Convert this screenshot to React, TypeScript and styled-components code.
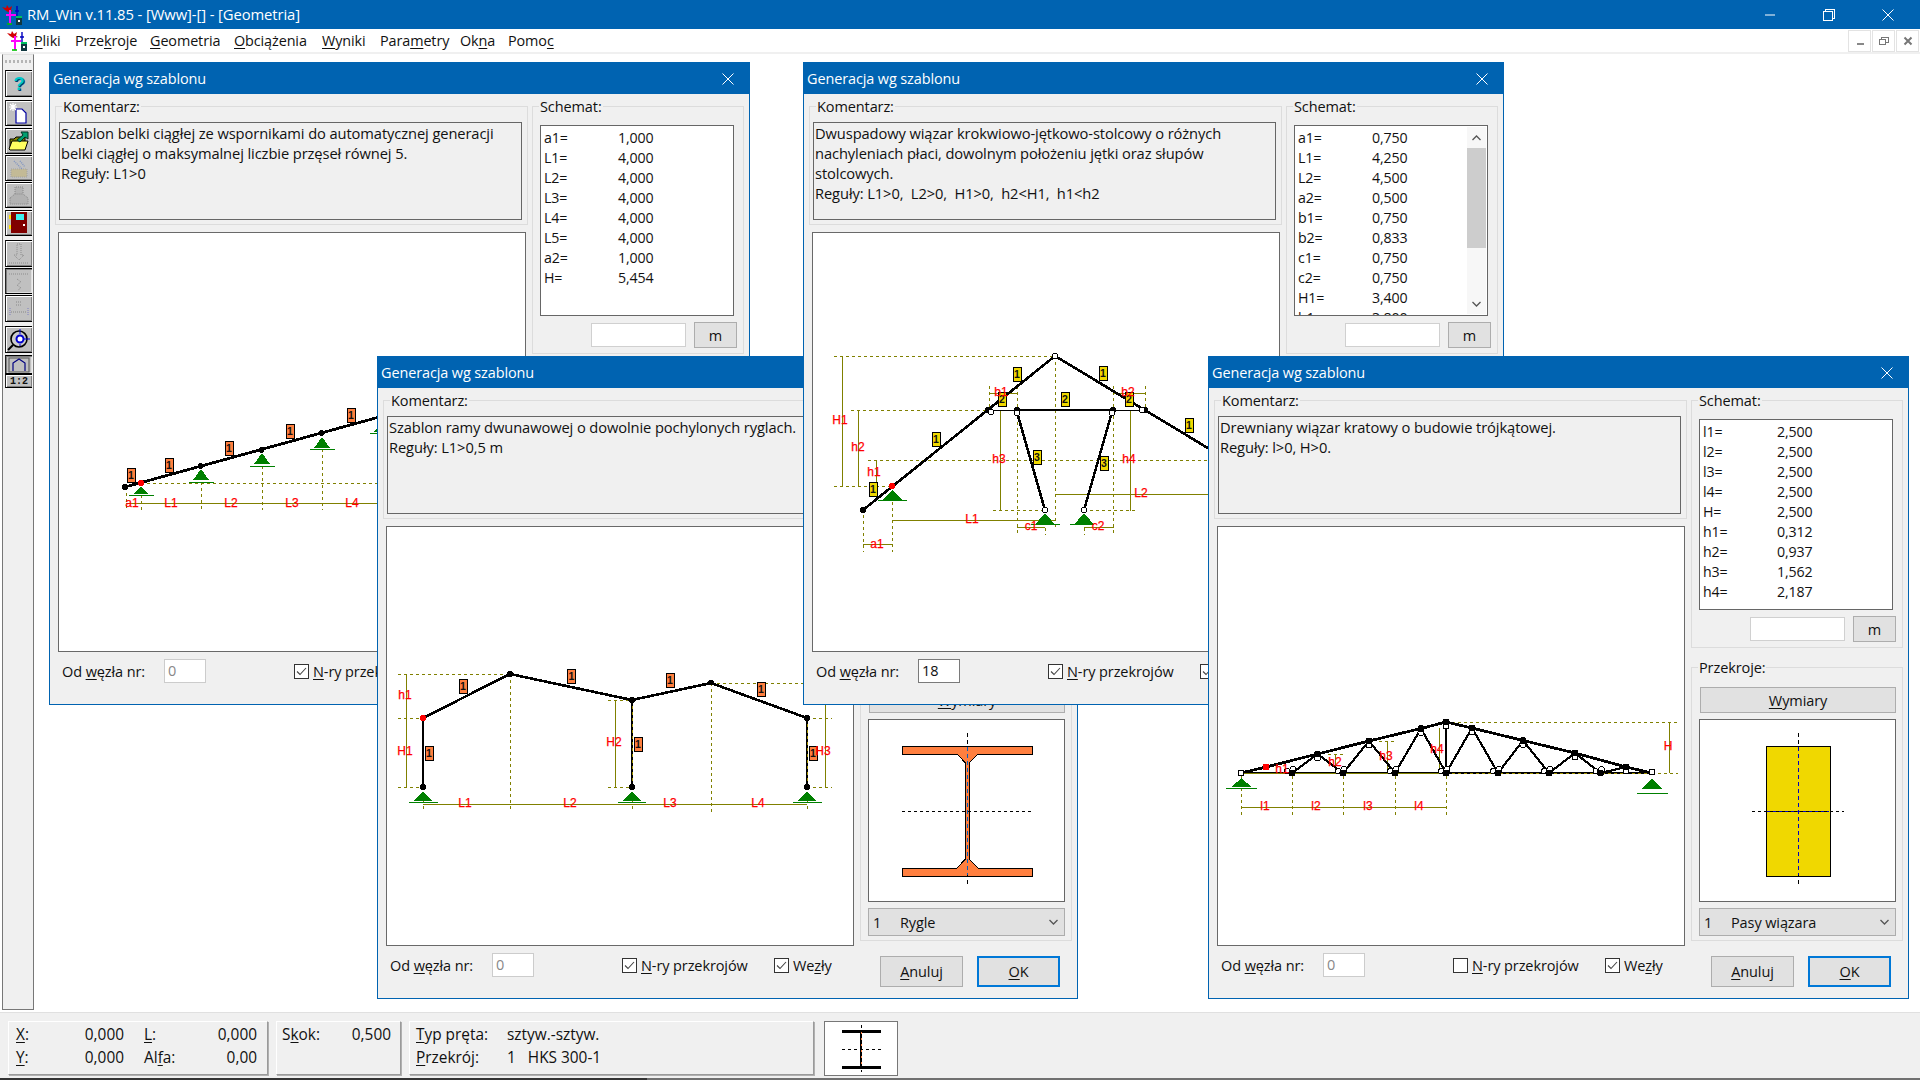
import React from "react";
import styled, { createGlobalStyle } from "styled-components";

const FONT = `"Open Sans", "Noto Sans", "Liberation Sans", sans-serif`;
const OLIVE = "#808000";
const GREEN = "#008000";
const RED = "#ff0000";
const ORANGE = "#ff7f3f";
const YELLOW = "#f0d800";

const Global = createGlobalStyle`
  html, body { margin: 0; padding: 0; background: #fff; overflow: hidden; }
  body { font-family: ${FONT}; font-size: 14.5px; color: #111; letter-spacing: -0.1px; }
`;

const Page = styled.div`
  width: 1920px;
  height: 1080px;
  display: flex;
  flex-direction: column;
  background: #fff;
  overflow: hidden;
`;

const U = styled.u`
  text-underline-offset: 2px;
  text-decoration-thickness: 1px;
`;

/* ------------ title + menu ------------ */
const TitleBar = styled.header`
  height: 29px;
  flex: none;
  background: #0063b1;
  color: #fff;
  display: flex;
  align-items: center;
  padding-left: 2px;
`;
const AppTitle = styled.span`
  margin-left: 5px;
  margin-bottom: 2px;
  font-size: 14.8px;
`;
const WinControls = styled.div`
  margin-left: auto;
  padding-right: 3px;
  display: flex;
  align-items: center;
`;
const WinBtn = styled.div`
  width: 59px;
  height: 29px;
  display: flex;
  align-items: center;
  justify-content: center;
`;
const MenuBar = styled.nav`
  height: 25px;
  flex: none;
  box-sizing: border-box;
  display: flex;
  align-items: center;
  padding-left: 7px;
  background: #fff;
  border-bottom: 2px solid #f0f0f0;
`;
const MenuItems = styled.div`
  display: flex;
  margin-left: 7px;
`;
const MenuItem = styled.span<{ $w: number }>`
  width: ${(p) => p.$w}px;
  font-size: 14.4px;
`;
const MdiBtns = styled.div`
  margin-left: auto;
  display: flex;
  gap: 1px;
  padding-right: 1px;
`;
const MdiBtn = styled.div`
  width: 23px;
  height: 22px;
  box-sizing: border-box;
  border: 1px solid #e3e3e3;
  display: flex;
  align-items: center;
  justify-content: center;
`;

/* ------------ workspace ------------ */
const Workspace = styled.main`
  flex: 1;
  display: flex;
  min-height: 0;
`;
const Toolbar = styled.aside`
  width: 32px;
  margin-left: 2px;
  margin-bottom: 2px;
  box-sizing: border-box;
  background: #f0f0f0;
  border-left: 1px solid #777;
  border-right: 1px solid #777;
  border-bottom: 1px solid #777;
  border-top: 1px solid #e0e0e0;
  display: flex;
  flex-direction: column;
  padding-left: 2px;
`;
const Grip = styled.div`
  height: 3px;
  margin: 5px 2px 7px 0;
  background: repeating-linear-gradient(90deg, #b5b5b5 0 2px, transparent 2px 4px);
`;
const ToolBtn = styled.div<{ $h: number; $mt?: number; $down?: boolean }>`
  width: 27px;
  height: ${(p) => p.$h}px;
  margin-top: ${(p) => p.$mt ?? 0}px;
  flex: none;
  box-sizing: border-box;
  background: #c0c0c0;
  border-top: 1px solid #000;
  border-bottom: 1px solid #000;
  border-left: 1px solid #222;
  box-shadow: ${(p) =>
    p.$down
      ? "inset 1px 1px 0 #808080, inset -1px -1px 0 #dfdfdf"
      : "inset 1px 1px 0 #fff, inset -1px -1px 0 #808080"};
  display: flex;
  align-items: center;
  justify-content: center;
`;
const QuestionMark = styled.span`
  font-family: "Liberation Sans", sans-serif;
  font-weight: 700;
  font-size: 19px;
  color: #00c8c8;
  text-shadow: 1px 1px 0 #003a6a;
`;
const Ratio = styled.span`
  font-family: "Liberation Mono", monospace;
  font-size: 10px;
  font-weight: 700;
  letter-spacing: 0;
  color: #111;
`;
const Desktop = styled.div`
  flex: 1;
  position: relative;
`;

/* ------------ dialog ------------ */
const Dialog = styled.section<{ $x: number; $y: number }>`
  position: absolute;
  left: ${(p) => p.$x - 34}px;
  top: ${(p) => p.$y - 54}px;
  width: 701px;
  height: 643px;
  box-sizing: border-box;
  border: 1px solid #0063b1;
  background: #f0f0f0;
  display: flex;
  flex-direction: column;
`;
const DialogTitle = styled.div`
  height: 31px;
  flex: none;
  background: #0063b1;
  color: #fff;
  display: flex;
  align-items: center;
  justify-content: space-between;
  padding: 0 15px 0 3px;
  font-size: 14.45px;
`;
const DialogBody = styled.div`
  flex: 1;
  display: grid;
  grid-template-columns: 477px 212px;
  padding-left: 5px;
  padding-top: 12px;
  min-height: 0;
`;
const LeftCol = styled.div`
  display: flex;
  flex-direction: column;
  min-width: 0;
`;
const RightCol = styled.div`
  display: flex;
  flex-direction: column;
  min-width: 0;
`;
const Group = styled.div<{ $h: number; $w: number; $mt?: number }>`
  position: relative;
  box-sizing: border-box;
  width: ${(p) => p.$w}px;
  height: ${(p) => p.$h}px;
  margin-top: ${(p) => p.$mt ?? 0}px;
  border: 1px solid #dcdcdc;
`;
const Legend = styled.span`
  position: absolute;
  top: -9px;
  left: 6px;
  padding: 0 1px;
  background: #f0f0f0;
  line-height: 18px;
`;
const CommentBox = styled.div`
  box-sizing: border-box;
  margin: 15px 5px 0 3px;
  height: 98px;
  border: 1px solid #666;
  padding: 0 1px;
  line-height: 20px;
  font-size: 14.7px;
  white-space: pre;
`;
const Canvas = styled.div`
  box-sizing: border-box;
  width: 468px;
  height: 420px;
  margin: 7px 0 0 3px;
  background: #fff;
  border: 1px solid #696969;
  overflow: hidden;
`;
const DiagramSvg = styled.svg`
  display: block;
  width: 466px;
  height: 418px;
  shape-rendering: crispEdges;
  text {
    shape-rendering: auto;
  }
`;
const FooterRow = styled.div`
  display: grid;
  grid-template-columns: 102px 130px 152px auto;
  align-items: center;
  padding-left: 7px;
  margin-top: 7px;
  height: 24px;
`;
const NumberInput = styled.div<{ $active?: boolean }>`
  box-sizing: border-box;
  width: 42px;
  height: 24px;
  background: #fff;
  border: 1px solid ${(p) => (p.$active ? "#7a7a7a" : "#ccc")};
  color: ${(p) => (p.$active ? "#111" : "#888")};
  padding-left: 3px;
  line-height: 21px;
`;
const CheckLabel = styled.div`
  display: flex;
  align-items: center;
  gap: 4px;
`;
const CheckBox = styled.span`
  box-sizing: border-box;
  width: 15px;
  height: 15px;
  background: #fff;
  border: 1px solid #333;
  display: flex;
  align-items: center;
  justify-content: center;
`;
const ListBox = styled.div`
  position: relative;
  box-sizing: border-box;
  margin: 18px 0 0 7px;
  width: 194px;
  height: 191px;
  background: #fff;
  border: 1px solid #666;
  padding: 2px 3px;
  overflow: hidden;
  font-size: 14.2px;
`;
const ListRow = styled.div`
  display: grid;
  grid-template-columns: 74px auto;
  height: 20px;
  line-height: 20px;
  white-space: nowrap;
`;
const ScrollBar = styled.div`
  position: absolute;
  top: 1px;
  right: 1px;
  bottom: 1px;
  width: 19px;
  background: #f7f7f7;
  display: flex;
  flex-direction: column;
  align-items: center;
  justify-content: space-between;
`;
const ScrollThumb = styled.div`
  position: absolute;
  top: 21px;
  left: 0;
  width: 19px;
  height: 100px;
  background: #cdcdcd;
`;
const ScrollArrow = styled.div`
  height: 21px;
  display: flex;
  align-items: center;
`;
const UnitRow = styled.div`
  display: flex;
  align-items: center;
  margin: 6px 0 0 58px;
  gap: 8px;
`;
const TextField = styled.div`
  box-sizing: border-box;
  width: 95px;
  height: 24px;
  background: #fff;
  border: 1px solid #d0d0d0;
`;
const PlainButton = styled.div<{ $w: number; $h: number }>`
  box-sizing: border-box;
  width: ${(p) => p.$w}px;
  height: ${(p) => p.$h}px;
  background: #e1e1e1;
  border: 1px solid #adadad;
  display: flex;
  align-items: center;
  justify-content: center;
`;
const DefaultButton = styled(PlainButton)`
  border: 2px solid #0078d7;
`;
const WideBtnSlot = styled.div`
  margin: 19px 0 0 8px;
`;
const SectionBox = styled.div`
  box-sizing: border-box;
  margin: 6px 0 0 7px;
  width: 197px;
  height: 183px;
  background: #fff;
  border: 1px solid #666;
`;
const SectionSvg = styled.svg`
  display: block;
  width: 195px;
  height: 181px;
  shape-rendering: crispEdges;
`;
const SelectBox = styled.div`
  box-sizing: border-box;
  margin: 6px 0 0 7px;
  width: 197px;
  height: 28px;
  background: #e1e1e1;
  border: 1px solid #adadad;
  display: flex;
  align-items: center;
  padding: 0 6px 0 4px;
`;
const SelectNum = styled.span`
  width: 27px;
`;
const SelectChevron = styled.span`
  margin-left: auto;
  display: flex;
`;
const ActionRow = styled.div`
  display: flex;
  gap: 14px;
  margin: 15px 0 0 20px;
`;

/* ------------ status bar ------------ */
const StatusBar = styled.footer`
  height: 66px;
  flex: none;
  box-sizing: border-box;
  background: #f0f0f0;
  border-top: 1px solid #e0e0e0;
  display: flex;
  align-items: flex-start;
  gap: 8px;
  padding: 8px 0 0 8px;
`;
const Panel = styled.div<{ $w: number; $cols: string; $pl?: number }>`
  box-sizing: border-box;
  width: ${(p) => p.$w}px;
  height: 54px;
  padding: 1px 0 0 ${(p) => p.$pl ?? 7}px;
  display: grid;
  grid-template-columns: ${(p) => p.$cols};
  grid-auto-rows: 23px;
  align-items: center;
  font-size: 15.4px;
  letter-spacing: 0;
  border: 1px solid;
  border-color: #fff #9a9a9a #9a9a9a #fff;
  box-shadow: 1px 1px 0 #b0b0b0;
`;
const Num = styled.span`
  text-align: right;
`;
const SecondLabel = styled.span`
  padding-left: 20px;
`;
const Mini = styled.div`
  box-sizing: border-box;
  width: 74px;
  height: 55px;
  margin: 0 0 0 2px;
  background: #fff;
  border: 1px solid #777;
`;
const TaskStrip = styled.div`
  height: 2px;
  flex: none;
  background: linear-gradient(90deg, #333 0 647px, #707070 647px 100%);
`;

/* ------------ diagram primitives ------------ */
type P = [number, number];
const Dash = ({ a, b, c = OLIVE }: { a: P; b: P; c?: string }) => (
  <line x1={a[0]} y1={a[1]} x2={b[0]} y2={b[1]} stroke={c} strokeWidth={1} strokeDasharray="3 3" />
);
const Dim = ({ a, b }: { a: P; b: P }) => (
  <line x1={a[0]} y1={a[1]} x2={b[0]} y2={b[1]} stroke={OLIVE} strokeWidth={1} />
);
const Bar = ({ pts, w = 2.6 }: { pts: P[]; w?: number }) => (
  <polyline points={pts.map((p) => p.join(",")).join(" ")} fill="none" stroke="#000" strokeWidth={w} />
);
const Knot = ({ p, c = "#000", r = 3 }: { p: P; c?: string; r?: number }) => (
  <circle cx={p[0]} cy={p[1]} r={r} fill={c} />
);
const Open = ({ p, r = 2.6 }: { p: P; r?: number }) => (
  <circle cx={p[0]} cy={p[1]} r={r} fill="#fff" stroke="#000" strokeWidth={1} />
);
const Support = ({ x, tip, base, line, hw = 9, ll, lr }: { x: number; tip: number; base: number; line: number; hw?: number; ll: number; lr: number }) => (
  <g>
    <polygon points={`${x},${tip} ${x + hw},${base} ${x - hw},${base}`} fill={GREEN} />
    <line x1={ll} y1={line} x2={lr} y2={line} stroke={GREEN} strokeWidth={1} />
  </g>
);
const Tag = ({ p, t = "1", c = ORANGE }: { p: P; t?: string; c?: string }) => (
  <g>
    <rect x={p[0] - 4} y={p[1] - 7} width={8} height={14} fill={c} stroke="#000" strokeWidth={1} />
    <text x={p[0]} y={p[1] + 4} textAnchor="middle" fontFamily="Liberation Sans" fontWeight="700" fontSize="10.5" fill="#111" letterSpacing="0">
      {t}
    </text>
  </g>
);
const Lab = ({ p, t }: { p: P; t: string }) => (
  <text x={p[0]} y={p[1] + 4} textAnchor="middle" fontFamily="Liberation Sans" fontSize="12" fontWeight="400" fill={RED} stroke={RED} strokeWidth="0.25" letterSpacing="0">
    {t}
  </text>
);

const BeamDiagram = () => (
  <g>
    <Dash a={[140, 483]} b={[540, 483]} />
    {[[125, 487], [140, 495], [200, 482], [261, 466], [321, 449]].map(([x, y]) => (
      <Dash key={x} a={[x, y]} b={[x, 510]} />
    ))}
    <Dim a={[125, 503]} b={[520, 503]} />
    <Bar pts={[[124, 487], [520, 378]]} w={2.8} />
    <Support x={140} tip={486} base={494} line={495.5} hw={7.5} ll={128} lr={153} />
    <Support x={200} tip={469} base={480} line={482} hw={8} ll={188} lr={213} />
    <Support x={261} tip={453} base={464} line={466} hw={8} ll={249} lr={274} />
    <Support x={321} tip={437} base={448} line={449} hw={8} ll={309} lr={334} />
    <Support x={381} tip={421} base={432} line={433} hw={8} ll={369} lr={394} />
    <Knot p={[124, 487]} />
    <Knot p={[140, 483]} c={RED} />
    <Knot p={[199.5, 466]} />
    <Knot p={[260.5, 450]} />
    <Knot p={[320.5, 433]} />
    {([[130, 475], [168, 465], [228, 448], [289, 431], [350, 415]] as P[]).map((p) => (
      <Tag key={p[0]} p={p} />
    ))}
    <Lab p={[131, 503]} t="a1" />
    <Lab p={[170, 503]} t="L1" />
    <Lab p={[230, 503]} t="L2" />
    <Lab p={[291, 503]} t="L3" />
    <Lab p={[351, 503]} t="L4" />
  </g>
);

const FrameDiagram = () => (
  <g>
    <Dash a={[397, 674]} b={[509, 674]} />
    <Dash a={[397, 718]} b={[422, 718]} />
    <Dash a={[397, 787]} b={[422, 787]} />
    <Dim a={[405, 674]} b={[405, 787]} />
    <Dash a={[607, 700]} b={[631, 700]} />
    <Dash a={[607, 787]} b={[631, 787]} />
    <Dim a={[614, 700]} b={[614, 787]} />
    <Dash a={[710, 683]} b={[832, 683]} />
    <Dash a={[806, 718]} b={[831, 718]} />
    <Dash a={[806, 787]} b={[831, 787]} />
    <Dim a={[824, 683]} b={[824, 787]} />
    <Dash a={[509.5, 674]} b={[509.5, 812]} />
    <Dash a={[710.5, 683]} b={[710.5, 812]} />
    <Dash a={[422, 800]} b={[422, 812]} />
    <Dash a={[631.5, 800]} b={[631.5, 812]} />
    <Dash a={[806.5, 800]} b={[806.5, 812]} />
    <Dim a={[422, 804]} b={[806, 804]} />
    <Bar pts={[[422, 787], [422, 718], [509, 674], [631, 700], [710, 683], [806, 718], [806, 787]]} />
    <Bar pts={[[631, 700], [631, 787]]} />
    <Dash a={[631.5, 700]} b={[631.5, 787]} c="#a09000" />
    <Dash a={[806.5, 718]} b={[806.5, 787]} c="#a09000" />
    <Support x={422} tip={791} base={801} line={802} hw={9} ll={408} lr={437} />
    <Support x={631} tip={791} base={801} line={802} hw={9} ll={617} lr={645} />
    <Support x={806} tip={791} base={801} line={802} hw={9} ll={792} lr={821} />
    <Knot p={[422, 718]} c={RED} />
    {([[422, 787], [509, 674], [631, 700], [631, 787], [710, 682.5], [806, 718], [806, 787]] as P[]).map((p) => (
      <Knot key={p.join()} p={p} />
    ))}
    {([[462, 686], [570.5, 676], [669, 680], [760, 689], [428, 753], [637, 744], [812, 753]] as P[]).map((p) => (
      <Tag key={p[0]} p={p} />
    ))}
    <Lab p={[404, 695]} t="h1" />
    <Lab p={[404, 751]} t="H1" />
    <Lab p={[613, 742]} t="H2" />
    <Lab p={[822, 751]} t="H3" />
    <Lab p={[464, 803]} t="L1" />
    <Lab p={[569, 803]} t="L2" />
    <Lab p={[669, 803]} t="L3" />
    <Lab p={[757, 803]} t="L4" />
  </g>
);

const RafterDiagram = () => (
  <g>
    <Dash a={[833, 356]} b={[1054, 356]} />
    <Dim a={[841, 356]} b={[841, 486]} />
    <Dash a={[833, 486]} b={[891, 486]} />
    <Dash a={[850, 410.5]} b={[987, 410.5]} />
    <Dim a={[857, 410]} b={[857, 486]} />
    <Dash a={[867, 460]} b={[1260, 460]} />
    <Dim a={[875, 460]} b={[875, 486]} />
    <Dash a={[862, 515]} b={[862, 552]} />
    <Dash a={[891, 490]} b={[891, 552]} />
    <Dim a={[862, 544]} b={[891, 544]} />
    <Dim a={[891, 520.5]} b={[1054, 520.5]} />
    <Dash a={[1054.5, 356]} b={[1054.5, 528]} />
    <Dim a={[1054, 494.5]} b={[1260, 494.5]} />
    <Dim a={[988, 393]} b={[1016, 393]} />
    <Dash a={[988, 386]} b={[988, 410]} />
    <Dash a={[1016.5, 386]} b={[1016.5, 535]} />
    <Dim a={[1016, 527]} b={[1044, 527]} />
    <Dash a={[1044.5, 510]} b={[1044.5, 535]} />
    <Dim a={[1083, 527]} b={[1113, 527]} />
    <Dash a={[1083.5, 510]} b={[1083.5, 535]} />
    <Dash a={[1112.5, 386]} b={[1112.5, 535]} />
    <Dim a={[1113, 393]} b={[1145, 393]} />
    <Dash a={[1144.5, 386]} b={[1144.5, 410]} />
    <Dim a={[999.5, 410]} b={[999.5, 511]} />
    <Dash a={[992, 510.5]} b={[1044, 510.5]} />
    <Dim a={[1129.5, 410]} b={[1129.5, 511]} />
    <Dash a={[1083, 510.5]} b={[1137, 510.5]} />
    <Bar pts={[[862, 510], [1054, 356], [1240, 468]]} />
    <Bar pts={[[1016, 410], [1112, 410]]} w={2.8} />
    <Bar pts={[[990, 410], [1141, 410]]} w={1} />
    <Bar pts={[[1016, 412], [1044, 510]]} />
    <Bar pts={[[1111, 412], [1083, 510]]} />
    <Support x={891} tip={490} base={500} line={500.5} hw={10} ll={877} lr={906} />
    <Support x={1044} tip={513} base={523.5} line={524} hw={9} ll={1030} lr={1059} />
    <Support x={1083} tip={513} base={523.5} line={524} hw={9} ll={1069} lr={1093} />
    <Knot p={[862, 510]} />
    <Knot p={[891, 486]} c={RED} />
    <Knot p={[987, 410]} />
    <Knot p={[1144, 410]} />
    <Knot p={[1016, 410]} />
    <Knot p={[1112, 410]} />
    <Open p={[1054, 356]} />
    <Open p={[990, 412]} />
    <Open p={[1141, 410]} />
    <Open p={[1016, 413]} />
    <Open p={[1111, 413]} />
    <Open p={[1044, 510]} />
    <Open p={[1083, 510]} />
    {([[935, 439, "1"], [872, 489, "1"], [1016, 374, "1"], [1102, 373, "1"], [1001, 399, "2"], [1064, 399, "2"], [1128, 399, "2"], [1036, 457, "3"], [1103, 463, "3"], [1188, 425, "1"]] as [number, number, string][]).map(([x, y, t]) => (
      <Tag key={`${x}-${y}`} p={[x, y]} t={t} c={YELLOW} />
    ))}
    <Lab p={[839, 420]} t="H1" />
    <Lab p={[857, 447]} t="h2" />
    <Lab p={[873, 472]} t="h1" />
    <Lab p={[876, 544]} t="a1" />
    <Lab p={[971, 519]} t="L1" />
    <Lab p={[1140, 493]} t="L2" />
    <Lab p={[1000, 392]} t="b1" />
    <Lab p={[1127, 392]} t="b2" />
    <Lab p={[1030, 526]} t="c1" />
    <Lab p={[1097, 526]} t="c2" />
    <Lab p={[998, 459]} t="h3" />
    <Lab p={[1128, 459]} t="h4" />
  </g>
);

const TOP: P[] = [[1240, 773], [1265, 767], [1316.5, 754], [1368, 741], [1420, 728.5], [1445, 722], [1471, 728], [1522, 740.5], [1574, 753], [1625, 767], [1651, 773]];
const WEB: P[] = [[1291, 773], [1316.5, 754], [1342, 773], [1368, 741], [1394, 773], [1420, 728.5], [1445, 773], [1471, 728], [1497, 773], [1522, 740.5], [1548, 773], [1574, 753], [1599.5, 773], [1625, 767]];
const BOTTOM_NODES: P[] = [[1291, 773], [1342, 773], [1394, 773], [1445, 773], [1497, 773], [1548, 773], [1599.5, 773]];
const TOP_NODES: P[] = [[1316.5, 754], [1368, 741], [1420, 728.5], [1445, 722], [1471, 728], [1522, 740.5], [1574, 753], [1625, 767]];

const TrussDiagram = () => (
  <g>
    <Dash a={[1445, 722]} b={[1677, 722]} />
    <Dash a={[1651, 773]} b={[1677, 773]} />
    <Dim a={[1668.5, 722]} b={[1668.5, 773]} />
    <Dim a={[1334.5, 754]} b={[1334.5, 773]} />
    <Dim a={[1386, 741]} b={[1386, 773]} />
    <Dim a={[1438, 728]} b={[1438, 773]} />
    <Dash a={[1327, 754]} b={[1342, 754]} />
    <Dash a={[1378, 741]} b={[1393, 741]} />
    {[1240.5, 1291.5, 1342.5, 1394, 1445.5].map((x) => (
      <Dash key={x} a={[x, 776]} b={[x, 815]} />
    ))}
    <Dim a={[1240, 807]} b={[1446, 807]} />
    <Bar pts={TOP} w={2.8} />
    <Bar pts={WEB} w={2.2} />
    <Bar pts={[[1445, 722], [1445, 773]]} w={2.2} />
    <Bar pts={[[1240, 773], [1651, 773]]} w={2} />
    <Dim a={[1240, 773]} b={[1445, 773]} />
    <Dash a={[1445, 773]} b={[1651, 773]} c="#a09000" />
    <Support x={1240.5} tip={778} base={787} line={788.5} hw={10} ll={1225} lr={1256} />
    <Support x={1651} tip={778} base={788.5} line={793} hw={10} ll={1636} lr={1667} />
    {BOTTOM_NODES.map((p) => (
      <g key={p[0]}>
        <Open p={[p[0] + 1, p[1] - 3.5]} r={3} />
        <Open p={[p[0] - 5, p[1] - 2]} r={2.5} />
        <Knot p={p} r={3.4} />
      </g>
    ))}
    {TOP_NODES.map((p) => (
      <g key={p[0]}>
        <Open p={[p[0], p[1] + 4]} r={3} />
        <Knot p={p} r={3.4} />
      </g>
    ))}
    <Open p={[1240, 773]} r={3} />
    <Open p={[1651, 772]} r={3} />
    <Knot p={[1265, 767]} c={RED} r={3.4} />
    <Lab p={[1281, 769]} t="h1" />
    <Lab p={[1334, 762]} t="h2" />
    <Lab p={[1385, 756]} t="h3" />
    <Lab p={[1436, 749]} t="h4" />
    <Lab p={[1667, 746]} t="H" />
    <Lab p={[1264, 806]} t="l1" />
    <Lab p={[1315, 806]} t="l2" />
    <Lab p={[1367, 806]} t="l3" />
    <Lab p={[1418, 806]} t="l4" />
  </g>
);

const IBeamSection = () => (
  <SectionSvg viewBox="0 0 195 181">
    <path d="M33 26H163V34H109L100 43V139L109 148H163V156H33V148H88L96.5 139V43L88 34H33Z" fill={ORANGE} stroke="#000" strokeWidth={1} />
    <line x1="98" y1="13" x2="98" y2="166" stroke="#000" strokeDasharray="4 3" />
    <line x1="98" y1="27" x2="98" y2="155" stroke="#0060c0" strokeDasharray="4 3" />
    <line x1="33" y1="91" x2="162" y2="91" stroke="#000" strokeDasharray="3 3" />
  </SectionSvg>
);
const RectSection = () => (
  <SectionSvg viewBox="0 0 195 181">
    <rect x="66" y="26" width="64" height="130" fill={YELLOW} stroke="#000" />
    <line x1="98" y1="13" x2="98" y2="166" stroke="#000" strokeDasharray="4 3" />
    <line x1="98" y1="27" x2="98" y2="155" stroke="#0000c0" strokeDasharray="4 3" />
    <line x1="52" y1="91" x2="144" y2="91" stroke="#000" strokeDasharray="3 3" />
    <line x1="67" y1="91" x2="129" y2="91" stroke="#0000c0" strokeDasharray="3 3" />
  </SectionSvg>
);

const CheckMark = () => (
  <svg width="11" height="9" viewBox="0 0 11 9">
    <path d="M1 4.5L4 7.5L10 1" fill="none" stroke="#444" strokeWidth="1.1" />
  </svg>
);
const Chevron = ({ up }: { up?: boolean }) => (
  <svg width="9" height="6" viewBox="0 0 9 6">
    <path d={up ? "M.5 5L4.5 1L8.5 5" : "M.5 1L4.5 5L8.5 1"} fill="none" stroke="#555" strokeWidth="1.3" />
  </svg>
);
const CloseX = ({ size = 12 }: { size?: number }) => (
  <svg width={size} height={size} viewBox="0 0 12 12">
    <path d="M.5 .5L11.5 11.5M11.5 .5L.5 11.5" stroke="#fff" strokeWidth="1" />
  </svg>
);

const AppIcon = () => (
  <svg width="20" height="20" viewBox="0 0 20 20">
    <path d="M0 2L4 3L5 0L7 3L10 1L9 5L11 6L6 7L3 5Z" fill="#d00000" />
    <path d="M8 5V19" stroke="#ff00ff" strokeWidth="2" />
    <path d="M4 10H14" stroke="#ff00ff" strokeWidth="2" />
    <path d="M15 1V11M13 6H17" stroke="#0000c0" strokeWidth="1.4" />
    <path d="M5 19H10" stroke="#00c000" strokeWidth="1.6" />
    <rect x="14" y="12" width="6" height="8" fill="#103840" />
    <rect x="14" y="11" width="6" height="2" fill="#00c060" />
    <rect x="16" y="15" width="2" height="2" fill="#fff" />
  </svg>
);

type Row = [string, string];
type DlgProps = {
  x: number;
  y: number;
  comment: string[];
  rows: Row[];
  diagram: React.ReactNode;
  section: React.ReactNode;
  sectionName: string;
  nodeFrom: string;
  activeInput?: boolean;
  numbersChecked: boolean;
  scroll?: boolean;
};

const GenDialog = ({ x, y, comment, rows, diagram, section, sectionName, nodeFrom, activeInput, numbersChecked, scroll }: DlgProps) => (
  <Dialog $x={x} $y={y}>
    <DialogTitle>
      <span>Generacja wg szablonu</span>
      <CloseX />
    </DialogTitle>
    <DialogBody>
      <LeftCol>
        <Group $w={473} $h={119}>
          <Legend>Komentarz:</Legend>
          <CommentBox>
            {comment.map((l) => (
              <div key={l}>{l}</div>
            ))}
          </CommentBox>
        </Group>
        <Canvas>
          <DiagramSvg viewBox={`${x + 9} ${y + 171} 466 418`}>{diagram}</DiagramSvg>
        </Canvas>
        <FooterRow>
          <span>
            Od <U>w</U>ęzła nr:
          </span>
          <NumberInput $active={activeInput}>{nodeFrom}</NumberInput>
          <CheckLabel>
            <CheckBox>{numbersChecked && <CheckMark />}</CheckBox>
            <span>
              <U>N</U>-ry przekrojów
            </span>
          </CheckLabel>
          <CheckLabel>
            <CheckBox>
              <CheckMark />
            </CheckBox>
            <span>
              We<U>z</U>ły
            </span>
          </CheckLabel>
        </FooterRow>
      </LeftCol>
      <RightCol>
        <Group $w={212} $h={248}>
          <Legend>Schemat:</Legend>
          <ListBox>
            {rows.map(([k, v]) => (
              <ListRow key={k}>
                <span>{k}</span>
                <span>{v}</span>
              </ListRow>
            ))}
            {scroll && (
              <ScrollBar>
                <ScrollThumb />
                <ScrollArrow>
                  <Chevron up />
                </ScrollArrow>
                <ScrollArrow>
                  <Chevron />
                </ScrollArrow>
              </ScrollBar>
            )}
          </ListBox>
          <UnitRow>
            <TextField />
            <PlainButton $w={43} $h={26}>m</PlainButton>
          </UnitRow>
        </Group>
        <Group $w={212} $h={274} $mt={19}>
          <Legend>Przekroje:</Legend>
          <WideBtnSlot>
            <PlainButton $w={196} $h={26}>
              <span>
                <U>W</U>ymiary
              </span>
            </PlainButton>
          </WideBtnSlot>
          <SectionBox>{section}</SectionBox>
          <SelectBox>
            <SelectNum>1</SelectNum>
            <span>{sectionName}</span>
            <SelectChevron>
              <Chevron />
            </SelectChevron>
          </SelectBox>
        </Group>
        <ActionRow>
          <PlainButton $w={83} $h={31}>
            <span>
              <U>A</U>nuluj
            </span>
          </PlainButton>
          <DefaultButton $w={83} $h={31}>
            <span>
              <U>O</U>K
            </span>
          </DefaultButton>
        </ActionRow>
      </RightCol>
    </DialogBody>
  </Dialog>
);

const menu: [React.ReactNode, number][] = [
  [<><U>P</U>liki</>, 41],
  [<>Prze<U>k</U>roje</>, 75],
  [<><U>G</U>eometria</>, 84],
  [<><U>O</U>bciążenia</>, 88],
  [<><U>W</U>yniki</>, 58],
  [<>Para<U>m</U>etry</>, 80],
  [<>Ok<U>n</U>a</>, 48],
  [<>Pomo<U>c</U></>, 60],
];

const rowsW1: Row[] = [["a1=", "1,000"], ["L1=", "4,000"], ["L2=", "4,000"], ["L3=", "4,000"], ["L4=", "4,000"], ["L5=", "4,000"], ["a2=", "1,000"], ["H=", "5,454"]];
const rowsW2: Row[] = [["L1=", "4,000"], ["L2=", "4,000"], ["L3=", "4,000"], ["L4=", "4,000"]];
const rowsW3: Row[] = [["a1=", "0,750"], ["L1=", "4,250"], ["L2=", "4,500"], ["a2=", "0,500"], ["b1=", "0,750"], ["b2=", "0,833"], ["c1=", "0,750"], ["c2=", "0,750"], ["H1=", "3,400"], ["h1=", "3,800"]];
const rowsW4: Row[] = [["l1=", "2,500"], ["l2=", "2,500"], ["l3=", "2,500"], ["l4=", "2,500"], ["H=", "2,500"], ["h1=", "0,312"], ["h2=", "0,937"], ["h3=", "1,562"], ["h4=", "2,187"]];

export default function App() {
  return (
    <Page>
      <Global />
      <TitleBar>
        <AppIcon />
        <AppTitle>RM_Win v.11.85 - [Www]-[] - [Geometria]</AppTitle>
        <WinControls>
          <WinBtn>
            <svg width="12" height="12" viewBox="0 0 12 12">
              <path d="M1 6H11" stroke="#fff" />
            </svg>
          </WinBtn>
          <WinBtn>
            <svg width="12" height="12" viewBox="0 0 12 12" shapeRendering="crispEdges">
              <path d="M.5 2.5H9.5V11.5H.5ZM2.5 2.5V.5H11.5V9.5H9.5" stroke="#fff" fill="none" />
            </svg>
          </WinBtn>
          <WinBtn>
            <CloseX />
          </WinBtn>
        </WinControls>
      </TitleBar>
      <MenuBar>
        <AppIcon />
        <MenuItems>
          {menu.map(([label, w], i) => (
            <MenuItem key={i} $w={w}>
              {label}
            </MenuItem>
          ))}
        </MenuItems>
        <MdiBtns>
          <MdiBtn>
            <svg width="10" height="10" viewBox="0 0 10 10">
              <rect x="2" y="7" width="7" height="2" fill="#888" />
            </svg>
          </MdiBtn>
          <MdiBtn>
            <svg width="10" height="10" viewBox="0 0 10 10" shapeRendering="crispEdges">
              <path d="M.5 3.5H6.5V8.5H.5ZM2.5 3V1.5H9.5V6H7" stroke="#777" fill="none" />
            </svg>
          </MdiBtn>
          <MdiBtn>
            <svg width="10" height="10" viewBox="0 0 10 10">
              <path d="M1.5 1.5L8.5 8.5M8.5 1.5L1.5 8.5" stroke="#777" strokeWidth="2" />
            </svg>
          </MdiBtn>
        </MdiBtns>
      </MenuBar>
      <Workspace>
        <Toolbar>
          <Grip />
          <ToolBtn $h={27}>
            <QuestionMark>?</QuestionMark>
          </ToolBtn>
          <ToolBtn $h={26} $mt={3}>
            <svg width="22" height="22" viewBox="0 0 22 22">
              <path d="M8 7H14L18 11V21H8Z" fill="#fff" stroke="#0000a0" strokeWidth="1.2" />
              <path d="M5 1V9M1 5H9M2 2L8 8M8 2L2 8" stroke="#fff" strokeWidth="1.2" />
            </svg>
          </ToolBtn>
          <ToolBtn $h={26} $mt={2}>
            <svg width="22" height="22" viewBox="0 0 22 22">
              <path d="M2 9H6L8 7H17V19H2Z" fill="#808000" stroke="#000" />
              <path d="M1 19L4 11H20L17 20H2Z" fill="#ffff60" stroke="#000" />
              <path d="M9 10L15 5L13 2L20 2L20 9L17 7L12 12Z" fill="#00a070" stroke="#003020" />
            </svg>
          </ToolBtn>
          <ToolBtn $h={26} $mt={1}>
            <svg width="22" height="22" viewBox="0 0 22 22" opacity=".75">
              <path d="M3 12H19V20H3Z" fill="#c4b888" stroke="#999" strokeDasharray="1 1" />
              <path d="M6 4L14 12M12 4L17 10" stroke="#6a86c0" strokeDasharray="1 1" strokeWidth="1.4" />
            </svg>
          </ToolBtn>
          <ToolBtn $h={26} $mt={1}>
            <svg width="22" height="22" viewBox="0 0 22 22">
              <path d="M7 10V3H15V10M2 14L7 10H15L20 14V20H2Z" fill="#b2b2b2" stroke="#888" strokeDasharray="1 1" />
            </svg>
          </ToolBtn>
          <ToolBtn $h={26} $mt={2}>
            <svg width="22" height="24" viewBox="0 0 22 24">
              <rect x="3" y="1" width="16" height="21" fill="#800000" />
              <rect x="8" y="3" width="8" height="6" fill="#40f0f0" />
              <rect x="1" y="4" width="2" height="4" fill="#ffe000" />
              <rect x="1" y="14" width="2" height="4" fill="#ffe000" />
              <rect x="15" y="13" width="2" height="2" fill="#fff" />
            </svg>
          </ToolBtn>
          <ToolBtn $h={27} $mt={4}>
            <svg width="22" height="24" viewBox="0 0 22 24" fill="none" stroke="#8c8c8c" strokeDasharray="1 1">
              <path d="M9 2H13V13H16L11 18L6 13H9Z" />
              <path d="M1 21H21" />
            </svg>
          </ToolBtn>
          <ToolBtn $h={26} $mt={1} $down>
            <svg width="22" height="22" viewBox="0 0 22 22" fill="none" stroke="#8c8c8c" strokeDasharray="1 1">
              <path d="M1 4H21" />
              <path d="M9 9L13 12L9 15L13 18L10 20" />
            </svg>
          </ToolBtn>
          <ToolBtn $h={27} $mt={1}>
            <svg width="22" height="22" viewBox="0 0 22 22" fill="none" strokeDasharray="1 1">
              <path d="M8 4H14M8 7H14" stroke="#888" />
              <path d="M2 10V18M20 10V18" stroke="#7f7fc0" />
              <path d="M3 14H19" stroke="#888" />
            </svg>
          </ToolBtn>
          <ToolBtn $h={27} $mt={4}>
            <svg width="24" height="24" viewBox="0 0 24 24">
              <circle cx="12" cy="11" r="8" fill="#ccc" stroke="#000" strokeWidth="1.6" />
              <circle cx="13" cy="11" r="3.5" fill="#fff" stroke="#0000d0" strokeWidth="2" />
              <path d="M13 1V6M13 16V18M17 11H23" stroke="#0000d0" />
              <path d="M6 17L1 22" stroke="#000" strokeWidth="2" />
            </svg>
          </ToolBtn>
          <ToolBtn $h={19} $mt={2} $down>
            <svg width="22" height="16" viewBox="0 0 22 16" fill="none">
              <rect x="1" y="1" width="20" height="14" stroke="#666" strokeWidth="1.2" />
              <path d="M5 14V6L11 2L17 6V14" stroke="#000080" strokeWidth="1.2" />
            </svg>
          </ToolBtn>
          <ToolBtn $h={14}>
            <Ratio>1:2</Ratio>
          </ToolBtn>
        </Toolbar>
        <Desktop>
          <GenDialog
            x={49}
            y={62}
            comment={["Szablon belki ciągłej ze wspornikami do automatycznej generacji", "belki ciągłej o maksymalnej liczbie przęseł równej 5.", "Reguły: L1>0"]}
            rows={rowsW1}
            diagram={<BeamDiagram />}
            section={<IBeamSection />}
            sectionName="Belka"
            nodeFrom="0"
            numbersChecked
          />
          <GenDialog
            x={377}
            y={356}
            comment={["Szablon ramy dwunawowej o dowolnie pochylonych ryglach.", "Reguły: L1>0,5 m"]}
            rows={rowsW2}
            diagram={<FrameDiagram />}
            section={<IBeamSection />}
            sectionName="Rygle"
            nodeFrom="0"
            numbersChecked
          />
          <GenDialog
            x={803}
            y={62}
            comment={["Dwuspadowy wiązar krokwiowo-jętkowo-stolcowy o różnych", "nachyleniach płaci, dowolnym położeniu jętki oraz słupów", "stolcowych.", "Reguły: L1>0,  L2>0,  H1>0,  h2<H1,  h1<h2"]}
            rows={rowsW3}
            diagram={<RafterDiagram />}
            section={<RectSection />}
            sectionName="Krokwie"
            nodeFrom="18"
            activeInput
            numbersChecked
            scroll
          />
          <GenDialog
            x={1208}
            y={356}
            comment={["Drewniany wiązar kratowy o budowie trójkątowej.", "Reguły: l>0, H>0."]}
            rows={rowsW4}
            diagram={<TrussDiagram />}
            section={<RectSection />}
            sectionName="Pasy wiązara"
            nodeFrom="0"
            numbersChecked={false}
          />
        </Desktop>
      </Workspace>
      <StatusBar>
        <Panel $w={260} $cols="60px 48px 80px 53px">
          <span><U>X</U>:</span>
          <Num>0,000</Num>
          <SecondLabel><U>L</U>:</SecondLabel>
          <Num>0,000</Num>
          <span><U>Y</U>:</span>
          <Num>0,000</Num>
          <SecondLabel>Al<U>f</U>a:</SecondLabel>
          <Num>0,00</Num>
        </Panel>
        <Panel $w={125} $cols="66px 43px" $pl={5}>
          <span>S<U>k</U>ok:</span>
          <Num>0,500</Num>
        </Panel>
        <Panel $w={405} $cols="91px auto" $pl={6}>
          <span><U>T</U>yp pręta:</span>
          <span>sztyw.-sztyw.</span>
          <span><U>P</U>rzekrój:</span>
          <span>1 &nbsp;&nbsp;HKS 300-1</span>
        </Panel>
        <Mini>
          <svg width="72" height="53" viewBox="0 0 72 53" shapeRendering="crispEdges">
            <path d="M17 9H56M17 45H56" stroke="#000" strokeWidth="3" />
            <path d="M36 9V45" stroke="#000" strokeWidth="2" />
            <path d="M36 3V50" stroke="#000" strokeDasharray="3 2" />
            <path d="M36 10V44" stroke={ORANGE} strokeDasharray="2 4" />
            <path d="M17 27H56" stroke="#000" strokeDasharray="3 3" />
          </svg>
        </Mini>
      </StatusBar>
      <TaskStrip />
    </Page>
  );
}
